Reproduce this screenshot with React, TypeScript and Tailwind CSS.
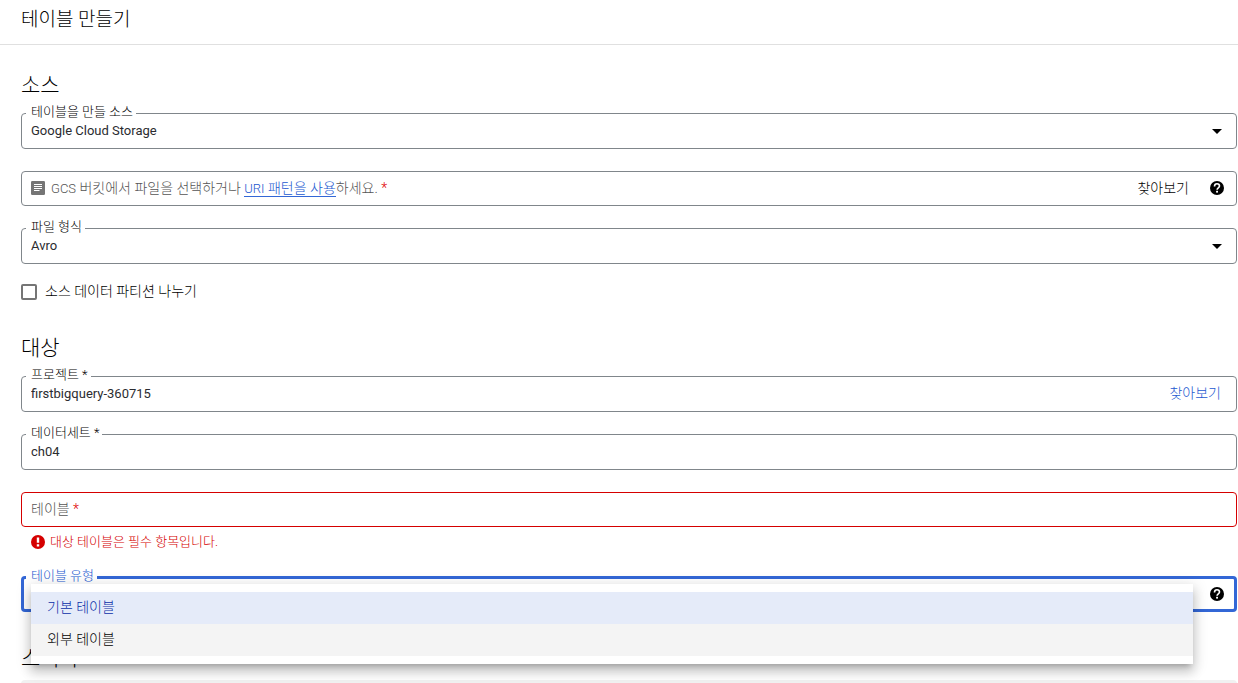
import React, { useState } from 'react';

const KR = "font-['Roboto','Noto_Sans_CJK_KR',sans-serif]";
const VALUE = "font-['Roboto','Noto_Sans_CJK_KR',sans-serif] text-[13px] font-normal text-[#2b2c30]";

function HelpIcon() {
  return (
    <svg viewBox="0 0 14 14" className="size-3.5" aria-hidden="true">
      <circle cx="7" cy="7" r="7" fill="#000" />
      <path d="M4.5 5.4C4.5 3.8 5.5 2.8 7 2.8s2.5 1 2.5 2.3c0 1.7-2.4 1.9-2.4 3.6" fill="none" stroke="#fff" strokeWidth="1.6" />
      <rect x="6.1" y="9.8" width="1.9" height="1.8" fill="#fff" />
    </svg>
  );
}

function ErrorIcon() {
  return (
    <svg viewBox="0 0 14 14" className="size-3.5 shrink-0" aria-hidden="true">
      <circle cx="7" cy="7" r="7" fill="#d50000" />
      <path d="M5.8 2.4h2.4v5.4H5.8zM5.8 9.2h2.4v2.2H5.8z" fill="#fff" />
    </svg>
  );
}

function ArticleIcon() {
  return (
    <svg viewBox="0 0 14 14" className="size-3.5 shrink-0" aria-hidden="true">
      <rect width="14" height="14" rx="1.2" fill="#757575" />
      <path d="M3 3.5h8M3 5.5h8M3 7.5h8M3 9.5h5.5" stroke="#fff" strokeWidth="1.1" />
    </svg>
  );
}

function Caret() {
  return (
    <svg viewBox="0 0 10 5" className="pointer-events-none mr-3.5 h-[5px] w-2.5 shrink-0" aria-hidden="true">
      <path d="M0 0h10L5 5z" fill="#000" />
    </svg>
  );
}

function FloatingLabel({ htmlFor, children }: { htmlFor: string; children: React.ReactNode }) {
  return (
    <label htmlFor={htmlFor} className="absolute -top-2.5 left-1 bg-white pr-[3px] pl-[5px] text-[13px] leading-4 text-black">
      {children}
    </label>
  );
}

function SelectField({ id, label, options }: { id: string; label: string; options: string[] }) {
  return (
    <div className="relative flex h-9 items-center rounded border border-[#80868b]">
      <FloatingLabel htmlFor={id}>{label}</FloatingLabel>
      <select id={id} className={`h-full min-w-0 grow appearance-none bg-transparent pl-[9px] outline-none ${VALUE}`}>
        {options.map((o) => (
          <option key={o}>{o}</option>
        ))}
      </select>
      <Caret />
    </div>
  );
}

function TextField({ id, label, value, children }: { id: string; label: string; value: string; children?: React.ReactNode }) {
  return (
    <div className="relative flex h-9 items-center rounded border border-[#80868b]">
      <FloatingLabel htmlFor={id}>{label}</FloatingLabel>
      <input id={id} defaultValue={value} className={`h-full min-w-0 grow bg-transparent pb-0.5 pl-[9px] outline-none ${VALUE}`} />
      {children}
    </div>
  );
}

function Heading({ children }: { children: React.ReactNode }) {
  return <h2 className="text-[21px] leading-8 font-light text-black">{children}</h2>;
}

export default function App() {
  const [type, setType] = useState('기본 테이블');
  return (
    <div className={`h-screen overflow-hidden bg-white text-sm font-light text-black ${KR}`}>
      <header className="border-b border-[#e0e0e0] px-[21px] pt-1.5 pb-2.5">
        <h1 className="text-[19px] leading-7 font-light">테이블 만들기</h1>
      </header>

      <main className="pt-6 pr-px pl-[21px]">
        <Heading>소스</Heading>
        <div className="mt-3 flex flex-col gap-[22px]">
          <SelectField id="source" label="테이블을 만들 소스" options={['Google Cloud Storage']} />
          <div className="flex h-[35px] items-center rounded border border-[#80868b] pb-px pl-[9px]">
            <ArticleIcon />
            <label htmlFor="gcs" className="ml-1.5 shrink-0 leading-5 text-[#555]">
              <span className="text-[13px]">GCS</span> 버킷에서 파일을 선택하거나{' '}
              <a href="#uri" className="border-b border-[#3367d6] text-[#2358d0]"><span className="text-[13px]">URI</span> 패턴을 사용</a>
              하세요. <span className="text-[#e00000]">*</span>
            </label>
            <input id="gcs" className="h-full min-w-0 grow bg-transparent outline-none" />
            <button type="button" className="pb-px leading-5">찾아보기</button>
            <button type="button" aria-label="도움말" className="mr-3 ml-[21px]">
              <HelpIcon />
            </button>
          </div>
          <SelectField id="format" label="파일 형식" options={['Avro']} />
        </div>

        <div className="mt-5 flex h-4 items-center gap-2">
          <input id="partition" type="checkbox" className="size-4 appearance-none rounded-xs border-2 border-[#757575] checked:bg-[#3367d6]" />
          <label htmlFor="partition" className="pb-0.5 leading-5">소스 데이터 파티션 나누기</label>
        </div>

        <div className="mt-8">
          <Heading>대상</Heading>
        </div>
        <div className="mt-3 flex flex-col gap-[22px]">
          <TextField id="project" label="프로젝트 *" value="firstbigquery-360715">
            <button type="button" className="mr-[15px] pb-0.5 leading-5 text-[#2358d0]">찾아보기</button>
          </TextField>
          <TextField id="dataset" label="데이터세트 *" value="ch04" />
          <div className="flex h-[35px] items-center rounded border border-[#d50000] pl-[9px]">
            <label htmlFor="table" className="shrink-0 pb-0.5 leading-5 text-[#555]">
              테이블 <span className="text-[#e00000]">*</span>
            </label>
            <input id="table" className="h-full min-w-0 grow bg-transparent outline-none" />
          </div>
        </div>
        <p className="mt-[5px] flex items-center gap-[5px] pl-2.5 text-[13px] leading-5 text-[#d50000]">
          <ErrorIcon />
          대상 테이블은 필수 항목입니다.
        </p>

        <div className="relative mt-6 flex h-9 items-center rounded border-3 border-[#3367d6]">
          <label htmlFor="type" className="absolute -top-[11px] left-0.5 bg-white pr-[3px] pl-[5px] text-[13px] leading-4 text-[#2358d0]">
            테이블 유형
          </label>
          <button id="type" type="button" aria-haspopup="listbox" aria-expanded="true" className="h-full grow" />
          <button type="button" aria-label="도움말" className="mr-2.5">
            <HelpIcon />
          </button>
          <ul
            role="listbox"
            aria-label="테이블 유형"
            className="absolute top-[5px] right-[41px] left-[7px] z-10 bg-white py-2 shadow-[0_5px_5px_-3px_rgba(0,0,0,0.2),0_8px_10px_1px_rgba(0,0,0,0.14),0_3px_14px_2px_rgba(0,0,0,0.12)]"
          >
            {['기본 테이블', '외부 테이블'].map((o) => (
              <li
                key={o}
                role="option"
                aria-selected={o === type}
                onClick={() => setType(o)}
                className={`px-4 pb-0.5 leading-[30px] ${o === type ? 'bg-[#e5ebf9] text-[#0a2fa8]' : 'bg-[#f4f4f4] text-black'}`}
              >
                {o}
              </li>
            ))}
          </ul>
        </div>

        <div className="mt-[30px]">
          <Heading>스키마</Heading>
        </div>
        <div className="mt-1.5 h-12 rounded bg-[#f1f1f1]" />
      </main>
    </div>
  );
}
